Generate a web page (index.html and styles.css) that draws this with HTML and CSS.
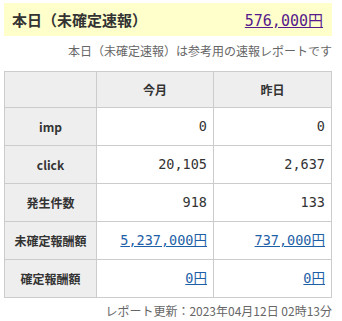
FILE: index.html
```html
<!DOCTYPE html>
<html lang="ja">
<head>
<meta charset="utf-8">
<link rel="stylesheet" href="styles.css">
</head>
<body>
<div class="wrap">
  <div class="today">
    <span class="today-title">本日（未確定速報）</span>
    <a class="today-value" href="#">576,000円</a>
  </div>
  <p class="note">本日（未確定速報）は参考用の速報レポートです</p>
  <table class="report">
    <colgroup>
      <col class="c1"><col class="c2"><col class="c3">
    </colgroup>
    <thead>
      <tr><th></th><th>今月</th><th>昨日</th></tr>
    </thead>
    <tbody>
      <tr><th>imp</th><td>0</td><td>0</td></tr>
      <tr><th>click</th><td>20,105</td><td>2,637</td></tr>
      <tr><th>発生件数</th><td>918</td><td>133</td></tr>
      <tr><th>未確定報酬額</th><td><a href="#">5,237,000円</a></td><td><a href="#">737,000円</a></td></tr>
      <tr><th>確定報酬額</th><td><a href="#">0円</a></td><td><a href="#">0円</a></td></tr>
    </tbody>
  </table>
  <p class="updated">レポート更新：2023年04月12日 02時13分</p>
</div>
</body>
</html>
```

FILE: styles.css
```css
html, body {
  margin: 0;
  padding: 0;
  background: #ffffff;
}
body {
  font-family: "Noto Sans CJK JP", "Noto Sans", sans-serif;
  color: #333333;
  font-size: 12px;
}
.wrap {
  width: 328px;
  margin: 3px 0 0 4px;
}
.today {
  display: flex;
  justify-content: space-between;
  align-items: center;
  height: 33px;
  padding: 0 9px 0 8px;
  background: #ffffcc;
}
.today-title {
  font-size: 15px;
  font-weight: bold;
  color: #333333;
}
.today-value {
  font-family: "DejaVu Sans Mono", "Noto Sans CJK JP", monospace;
  font-size: 15px;
  color: #551a8b;
  text-decoration: underline;
}
.note {
  margin: 6px 0 0;
  text-align: right;
  color: #666666;
  font-size: 12px;
  line-height: 18px;
}
.report {
  margin-top: 11px;
  width: 328px;
  border-collapse: collapse;
  table-layout: fixed;
}
.c1 { width: 92px; }
.c2 { width: 117px; }
.c3 { width: 118px; }
.report th,
.report td {
  border: 1px solid #cccccc;
  line-height: 17px;
  padding: 10px 6px;
}
.report thead th {
  height: 14px;
  padding: 9px 6px;
  background: #eeeeee;
  font-size: 12px;
  font-weight: bold;
  text-align: center;
}
.report tbody th {
  background: #eeeeee;
  font-size: 12px;
  font-weight: bold;
  text-align: center;
  height: 17px;
}
.report td {
  font-family: "DejaVu Sans Mono", "Noto Sans CJK JP", monospace;
  text-align: right;
  font-size: 13.5px;
  height: 17px;
  background: #ffffff;
}
.report a {
  color: #1f5fa8;
  text-decoration: underline;
}
.updated {
  margin: 4px 0 0;
  text-align: right;
  color: #666666;
  font-size: 12px;
  line-height: 18px;
}
```
